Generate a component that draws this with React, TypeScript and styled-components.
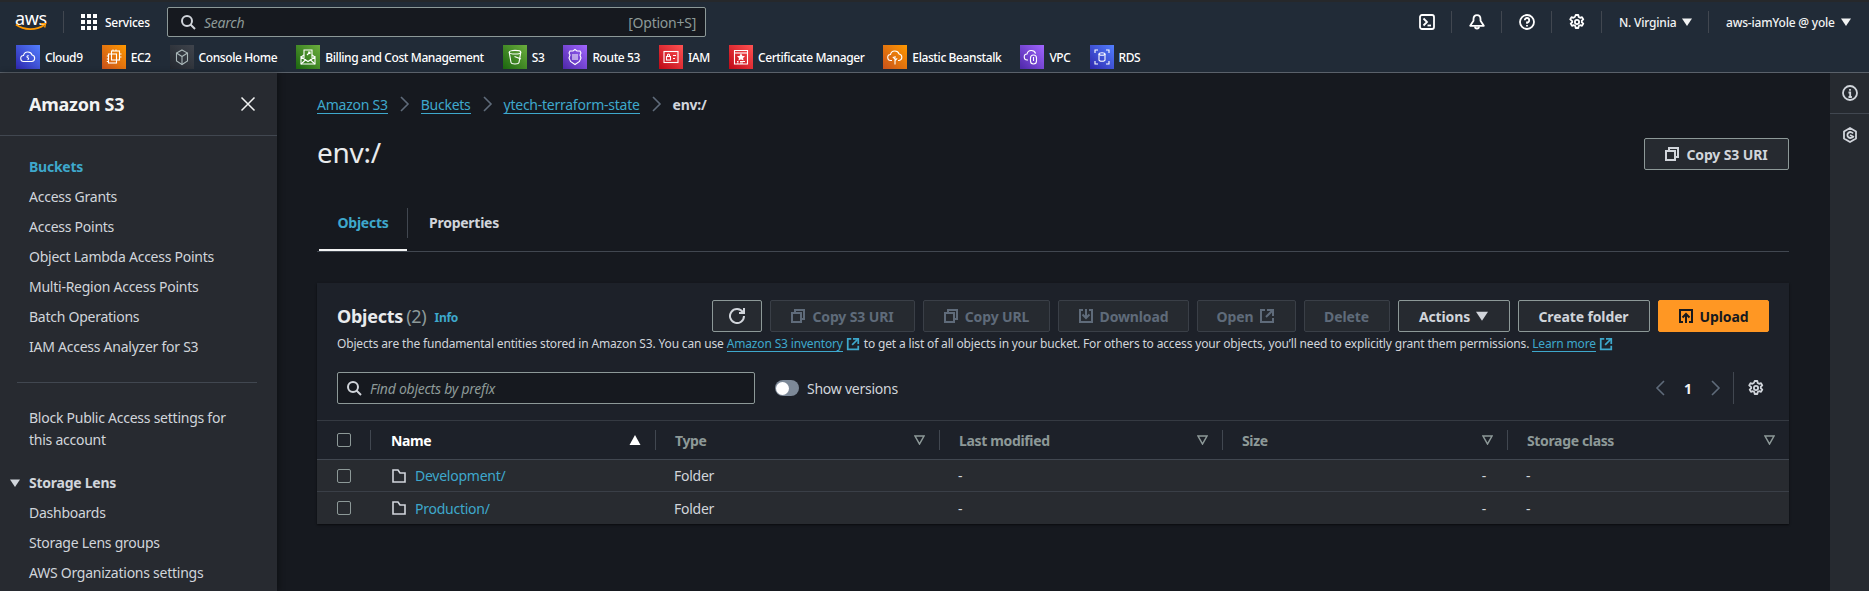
import React from "react";
import styled, { createGlobalStyle } from "styled-components";

const FONT = `"Noto Sans", "Open Sans", sans-serif`;
const LINK = "#3ea8cc";

const Global = createGlobalStyle`
  html, body { margin: 0; padding: 0; background: #16191f; }
  * { box-sizing: border-box; }
  body { font-family: ${FONT}; font-size: 14px; color: #d1d5db; -webkit-font-smoothing: antialiased; }
`;

const Page = styled.div`
  width: 1869px; height: 591px; overflow: hidden; display: flex; flex-direction: column;
  background: #16191f; letter-spacing: -0.25px;
`;
const TopNav = styled.header`
  height: 73px; flex: none; background: #212b37; border-top: 2px solid #26282b; border-bottom: 1px solid #5a616a;
  display: flex; flex-direction: column;
`;
const TopRow = styled.div`
  height: 39px; display: flex; align-items: center; padding: 1px 0 0 15px; color: #fff; font-size: 12px;
`;
const Logo = styled.div`
  width: 32px; height: 22px; position: relative; color: #fff; font-size: 18px; line-height: 15px; font-weight: 400; letter-spacing: -0.4px;
  svg { position: absolute; left: 0; top: 12px; }
`;
const VSep = styled.span`
  width: 1px; height: 22px; background: #414750; margin: 0 17px 0 16px; flex: none;
`;
const ServicesLabel = styled.span`
  margin: 0 17px 0 8px; font-size: 12px; font-weight: 500; width: 45px; white-space: nowrap;
`;
const SearchBox = styled.div`
  width: 539px; height: 30px; background: #16191f; border: 1px solid #8d9998; border-radius: 2px;
  display: flex; align-items: center; padding: 0 9px 0 12px; color: #d1d5db;
`;
const SearchHint = styled.span`
  font-style: italic; color: #8d9998; font-size: 14px; margin-left: 8px; flex: 1;
`;
const KeyHint = styled.span`
  color: #8d9998; font-size: 14px;
`;
const Spacer = styled.div`flex: 1;`;
const HeaderIcon = styled.span`
  width: 50px; height: 22px; border-right: 1px solid #414750; display: flex; align-items: center; justify-content: center; color: #fff; flex: none;
`;
const HeaderMenu = styled.span<{ $w: number; $last?: boolean }>`
  width: ${(p) => p.$w}px; height: 22px; display: flex; align-items: center; gap: 6px; padding-left: 17px; flex: none;
  font-size: 12px; font-weight: 500; white-space: nowrap; color: #f2f3f3; letter-spacing: -0.2px;
  border-right: ${(p) => (p.$last ? "none" : "1px solid #414750")};
`;
const FavRow = styled.div`
  display: flex; align-items: center; padding-left: 16px; height: 24px; margin-top: 4px; gap: 19px;
`;
const Fav = styled.span`
  display: flex; align-items: center; gap: 5px; color: #fff; font-size: 12px; font-weight: 500; white-space: nowrap; height: 24px; letter-spacing: -0.4px;
`;
const FavIcon = styled.span<{ $from: string; $to: string }>`
  width: 24px; height: 24px; flex: none; display: flex; align-items: center; justify-content: center;
  background: linear-gradient(45deg, ${(p) => p.$from}, ${(p) => p.$to});
`;

const Body = styled.div`
  flex: 1; display: flex; min-height: 0;
`;
const Sidebar = styled.nav`
  width: 277px; flex: none; background: #272a30; box-shadow: 2px 0 6px rgba(0,0,0,.35); position: relative;
`;
const SideHead = styled.div`
  height: 63px; border-bottom: 1px solid #414750; display: flex; align-items: center; justify-content: space-between;
  padding: 0 21px 0 29px; color: #f2f3f3; font-size: 18px; font-weight: 700;
`;
const SideList = styled.div`
  padding-top: 16px; display: flex; flex-direction: column;
`;
const SideItem = styled.div<{ $active?: boolean }>`
  height: 30px; line-height: 30px; padding-left: 29px; font-size: 14px; white-space: nowrap;
  color: ${(p) => (p.$active ? LINK : "#d1d5db")}; font-weight: ${(p) => (p.$active ? 700 : 400)};
`;
const SideRule = styled.hr`
  margin: 20px 0 24px 17px; width: 240px; height: 1px; border: 0; background: #414750;
`;
const SideBlock = styled.div`
  padding: 0 29px; width: 260px; line-height: 22px; font-size: 14px; color: #d1d5db; margin-bottom: 16px;
`;
const SideGroup = styled.div`
  height: 31px; display: flex; align-items: center; padding-left: 10px; gap: 9px; font-weight: 700; font-size: 14px; color: #d1d5db;
`;

const Main = styled.main`
  flex: 1; min-width: 0; padding: 21px 40px 0;
`;
const Crumbs = styled.div`
  display: flex; align-items: center; height: 20px; font-size: 14px;
`;
const Crumb = styled.span`
  color: ${LINK}; line-height: 17px; border-bottom: 1px solid ${LINK}; margin-top: 1px; white-space: nowrap;
`;
const CrumbSep = styled.span`
  width: 33px; display: flex; justify-content: center; color: #5f6b7a;
`;
const CrumbNow = styled.span`
  color: #d1d5db; font-weight: 700;
`;
const TitleRow = styled.div`
  display: flex; align-items: center; justify-content: space-between; margin-top: 22px; height: 36px;
`;
const Title = styled.h1`
  margin: -4px 0 0; font-size: 28px; line-height: 36px; font-weight: 400; color: #e9ebed;
`;
const Btn = styled.button<{ $w: number; $off?: boolean; $primary?: boolean }>`
  width: ${(p) => p.$w}px; height: 32px; flex: none; border-radius: 2px; font-family: ${FONT}; font-size: 14px; font-weight: 700; letter-spacing: -0.12px;
  display: flex; align-items: center; justify-content: center; gap: 6px; padding: 0 1px 0 0; white-space: nowrap;
  background: ${(p) => (p.$primary ? "#ff9723" : "#262a30")};
  color: ${(p) => (p.$primary ? "#16191f" : p.$off ? "#5f6b7a" : "#d1d5db")};
  border: 1px solid ${(p) => (p.$primary ? "#ff9723" : p.$off ? "#3a3f47" : "#8d9998")};
`;
const Tabs = styled.div`
  margin-top: 36px; height: 44px; border-bottom: 1px solid #414750; display: flex; padding-left: 2px;
`;
const Tab = styled.div<{ $active?: boolean }>`
  position: relative; width: ${(p) => (p.$active ? 89 : 112)}px; height: 30px; line-height: 30px; text-align: center; font-weight: 700; font-size: 14px;
  color: ${(p) => (p.$active ? LINK : "#d1d5db")}; border-right: ${(p) => (p.$active ? "1px solid #414750" : "none")};
  ${(p) => p.$active && `&::after { content: ""; position: absolute; left: 0; right: 0; top: 41px; height: 2px; background: #f2f3f3; }`}
`;
const Card = styled.section`
  margin-top: 31px; background: #1d2129; box-shadow: 0 1px 2px rgba(0,0,0,.6);
`;
const CardHead = styled.div`
  padding: 17px 20px 16px; height: 138px; border-bottom: 1px solid #353a42;
`;
const ActionRow = styled.div`
  display: flex; align-items: center; gap: 8px;
`;
const CardTitle = styled.h2`
  margin: 0; font-size: 18px; font-weight: 700; color: #e9ebed; white-space: nowrap; line-height: 32px;
`;
const Count = styled.span`
  font-weight: 400; color: #8d9998; margin-left: 3px;
`;
const Info = styled.span`
  font-size: 12px; font-weight: 700; color: ${LINK}; margin-left: 0; line-height: 16px; margin-top: 4px;
`;
const Desc = styled.p`
  margin: 4px 0 0; font-size: 12px; line-height: 16px; color: #d1d5db; white-space: nowrap; display: flex; align-items: center; letter-spacing: -0.16px;
`;
const DescLink = styled.span`
  color: ${LINK}; border-bottom: 1px solid ${LINK}; line-height: 14px; margin: 0 3px 0 3px;
`;
const ExtIcon = styled.span`
  color: ${LINK}; display: inline-flex; margin-right: 4px;
`;
const FilterRow = styled.div`
  display: flex; align-items: center; margin-top: 20px; height: 32px;
`;
const FilterBox = styled.div`
  width: 418px; height: 32px; background: #16191f; border: 1px solid #8d9998; border-radius: 2px; display: flex; align-items: center; padding-left: 8px; color: #d1d5db;
`;
const FilterHint = styled.span`
  font-style: italic; color: #8d9998; font-size: 14px; margin-left: 8px;
`;
const Toggle = styled.span`
  width: 24px; height: 16px; border-radius: 8px; background: #7d8998; margin: 0 8px 0 20px; display: flex; align-items: center; padding-left: 1px;
  &::before { content: ""; width: 13px; height: 13px; border-radius: 50%; background: #fff; }
`;
const ToggleLabel = styled.span`
  font-size: 14px; color: #d1d5db;
`;
const Pager = styled.div`
  display: flex; align-items: center; height: 32px; color: #5f6b7a; padding-right: 5px;
`;
const PageNum = styled.span`
  color: #f2f3f3; font-weight: 700; font-size: 14px; width: 38px; text-align: center;
`;
const PagerRule = styled.span`
  width: 1px; height: 32px; background: #414750; margin: 0 14px 0 10px;
`;
const GearBtn = styled.span`
  color: #d1d5db; display: flex;
`;

const COLS = "53px 285px 284px 283px 285px 282px";
const HeadRow = styled.div`
  display: grid; grid-template-columns: ${COLS}; height: 39px; align-items: center; border-bottom: 1px solid #414750;
`;
const HeadCell = styled.div<{ $on?: boolean }>`
  height: 20px; border-left: 1px solid #414750; padding: 0 14px 0 19px; display: flex; align-items: center; justify-content: space-between;
  font-size: 14px; font-weight: 700; letter-spacing: -0.35px; color: ${(p) => (p.$on ? "#fff" : "#8d9998")};
  &:nth-child(2) { padding-left: 20px; }
`;
const CheckCell = styled.div`
  padding-left: 20px; display: flex; align-items: center;
`;
const Check = styled.span`
  width: 14px; height: 14px; border: 1px solid #8d9998; border-radius: 2px; display: block;
`;
const DataRow = styled.div<{ $last?: boolean }>`
  display: grid; grid-template-columns: ${COLS}; height: 32px; align-items: center; background: #282b30;
  border-bottom: ${(p) => (p.$last ? "none" : "1px solid #3a3f47")};
`;
const NameCell = styled.div`
  display: flex; align-items: center; gap: 8px; padding-left: 21px; color: ${LINK}; font-size: 14px;
  svg { color: #d1d5db; }
`;
const TextCell = styled.div<{ $right?: boolean }>`
  padding-left: 19px; font-size: 14px; color: #d1d5db; ${(p) => p.$right && "text-align: right; padding-right: 21px; padding-left: 0;"}
`;
const Rail = styled.aside`
  width: 40px; flex: none; background: #262a30; border-left: 1px solid #16191f; display: flex; flex-direction: column; color: #d1d5db;
`;
const RailBtn = styled.div<{ $h: number }>`
  height: ${(p) => p.$h}px; display: flex; align-items: center; justify-content: center; border-bottom: 1px solid #414750;
  &:last-child { border-bottom: 0; }
`;

type IP = { s?: number; w?: number; children: React.ReactNode };
const Ic = ({ s = 16, w = 2, children }: IP) => (
  <svg width={s} height={s} viewBox="0 0 16 16" fill="none" stroke="currentColor" strokeWidth={w} style={{ flex: "none" }}>
    {children}
  </svg>
);
const SearchI = ({ s = 16 }: { s?: number }) => (
  <Ic s={s}><circle cx="7" cy="7" r="5" /><path d="M15 15l-4.5-4.5" /></Ic>
);
const CopyI = () => <Ic><path d="M2 5h9v9H2z" /><path d="M5 5V2h9v9h-3" /></Ic>;
const ExtI = ({ s = 16 }: { s?: number }) => (
  <Ic s={s}><path d="M14 8V2H8" /><path d="M14 2L7 9" /><path d="M6 2H2v12h12v-4" /></Ic>
);
const RefreshI = () => (
  <Ic><path d="M10 5h5V0" /><path d="M15 8a7 7 0 1 1-1.2-3.9" /></Ic>
);
const DownI = () => (
  <Ic><path d="M5 2H2v12h12V2h-3" /><path d="M4.5 6.5L8 10l3.5-3.5" /><path d="M8 1v9" /></Ic>
);
const UpI = () => (
  <Ic><path d="M5 14H2V2h12v12h-3" /><path d="M11.5 9.5L8 6 4.5 9.5" /><path d="M8 6v9" /></Ic>
);
const GearI = () => (
  <Ic w={1.8}>
    <path d="M6.7 1h2.6l.4 2 1.4.8 1.9-.7 1.3 2.3-1.5 1.3v1.6l1.5 1.3-1.3 2.3-1.9-.7-1.4.8-.4 2H6.7l-.4-2-1.4-.8-1.9.7-1.3-2.3 1.5-1.3V7.1L1.2 5.4l1.3-2.3 1.9.7 1.4-.8z" strokeLinejoin="round" />
    <circle cx="8" cy="8" r="2.1" />
  </Ic>
);
const FolderI = () => <Ic w={1.6}><path d="M2 14V2h5l2 3h5v9z" /></Ic>;
const Chev = ({ dir = "r", s = 16 }: { dir?: "l" | "r"; s?: number }) => (
  <Ic s={s} w={1.6}><path d={dir === "r" ? "M5 1l7 7-7 7" : "M11 1L4 8l7 7"} /></Ic>
);
const Caret = ({ s = 10, c = "currentColor" }: { s?: number; c?: string }) => (
  <svg width={s} height={s} viewBox="0 0 10 10" style={{ flex: "none" }}><path d="M0 1.5h10L5 9z" fill={c} /></svg>
);
const SortUp = () => (
  <svg width="12" height="10" viewBox="0 0 12 10"><path d="M6 0l5.5 10H.5z" fill="#fff" /></svg>
);
const FilterI = () => (
  <svg width="11" height="10" viewBox="0 0 11 10"><path d="M1 1h9L5.5 9z" fill="none" stroke="#8d9998" strokeWidth="1.5" /></svg>
);

const G = ({ children }: { children: React.ReactNode }) => (
  <svg width="18" height="18" viewBox="0 0 18 18" fill="none" stroke="#fff" strokeWidth="1.1">{children}</svg>
);

const favs: [string, string, string, React.ReactNode][] = [
  ["Cloud9", "#2e27ad", "#527fff", <G><path d="M5 13.5a3 3 0 0 1-.5-6 4.5 4.5 0 0 1 8.6-.5 3.3 3.3 0 0 1-.4 6.5z" /><path d="M9.8 8.2a1 1 0 1 0-.8 1.6c.8 0 .8 1.6-.4 1.8" /></G>],
  ["EC2", "#c8511b", "#ff9900", <G><rect x="6.5" y="3" width="8" height="9" /><rect x="3.5" y="6" width="8" height="9" /><path d="M1.8 8h1.7M1.8 11h1.7M1.8 13.5h1.7M8 3V1.5M11 3V1.5M14.5 6h2M14.5 9h2" /></G>],
  ["Console Home", "#23272e", "#3f444c", <G><path d="M9 2l5.5 3v8L9 16.5 3.5 13V5z" stroke="#aab7b8" /><path d="M3.5 5L9 8.5 14.5 5M9 8.5v8" stroke="#aab7b8" /></G>],
  ["Billing and Cost Management", "#1b660f", "#6cae3e", <G><path d="M2 9l7 4.5L16 9v7H2z" /><path d="M2 9l3-2M16 9l-3-2M2 16l5-4.5M16 16l-5-4.5" /><path d="M5 10V2h8v8" /><path d="M8 7l3-3M9 4h2v2" /></G>],
  ["S3", "#1b660f", "#6cae3e", <G><ellipse cx="9" cy="4.2" rx="5.8" ry="1.8" /><path d="M3.2 4.2L5 14.5c.2 1 1.8 1.5 4 1.5s3.8-.5 4-1.5l1.8-10.3" /><path d="M8.5 8.5l6.5 2.5" /></G>],
  ["Route 53", "#4d27a8", "#a166ff", <G><path d="M9 1.5l2 1.5h3l1 2-1 2 1 3-1.5 3.5L9 16.5 4.5 13.5 3 10l1-3-1-2 1-2h3z" /><path d="M6 9h6M6 11h6M6 7h6" /></G>],
  ["IAM", "#bd0816", "#ff5252", <G><rect x="2" y="3.5" width="14" height="11" /><rect x="4.5" y="8.5" width="4" height="3.5" /><path d="M5.5 8.5V7a1 1 0 0 1 2 0v1.5M11 7.5h3M11 10.5h2" /></G>],
  ["Certificate Manager", "#bd0816", "#ff5252", <G><path d="M2.5 16V2.5h13V16z" /><path d="M2.5 5h13" /><path d="M9 6.5l1 1.8 1.8.2-1.3 1.3.3 1.8L9 10.8l-1.8.8.3-1.8-1.3-1.3 1.8-.2z" fill="#fff" /><path d="M5 13.5h1.5M8 13.5h5M5 15h1.5M8 15h3" /></G>],
  ["Elastic Beanstalk", "#c8511b", "#ff9900", <G><path d="M6 12.5H5a3 3 0 0 1-.5-6 4.5 4.5 0 0 1 8.6-.5 3.3 3.3 0 0 1 0 6.5H12" /><path d="M9 16.5V8M9 11L6.8 8.8M9 12.5l2.2-2.2" /></G>],
  ["VPC", "#4d27a8", "#a166ff", <G><path d="M5 12H4.5a3 3 0 0 1-.5-6 4.5 4.5 0 0 1 8.6-.5" /><rect x="7.5" y="7" width="6" height="9" rx="3" /><path d="M10.5 9v4" /></G>],
  ["RDS", "#2e27ad", "#527fff", <G><path d="M2 5V2h3M13 2h3v3M16 13v3h-3M5 16H2v-3" /><ellipse cx="9" cy="6" rx="3" ry="1.2" /><path d="M6 6v6c0 .7 1.3 1.2 3 1.2s3-.5 3-1.2V6" /></G>],
];

const sideItems = ["Access Grants", "Access Points", "Object Lambda Access Points", "Multi-Region Access Points", "Batch Operations", "IAM Access Analyzer for S3"];

export default function App() {
  return (
    <Page>
      <Global />
      <TopNav>
        <TopRow>
          <Logo>
            aws
            <svg width="32" height="9" viewBox="0 0 32 9" fill="none">
              <path d="M1 1.5c8 6 20 6 28 .8" stroke="#ff9900" strokeWidth="1.8" />
              <path d="M26 .8l4.5-.3-.8 4" stroke="#ff9900" strokeWidth="1.4" />
            </svg>
          </Logo>
          <VSep />
          <svg width="16" height="16" viewBox="0 0 16 16" fill="#fff" style={{ flex: "none" }}>
            {[0, 6, 12].flatMap((x) => [0, 6, 12].map((y) => <rect key={`${x}-${y}`} x={x} y={y} width="4" height="4" />))}
          </svg>
          <ServicesLabel>Services</ServicesLabel>
          <SearchBox>
            <SearchI />
            <SearchHint>Search</SearchHint>
            <KeyHint>[Option+S]</KeyHint>
          </SearchBox>
          <Spacer />
          <HeaderIcon>
            <Ic w={1.8}><rect x="1" y="1" width="14" height="14" rx="2" /><path d="M4.5 4.5L8 8l-3.5 3.5" /><path d="M8.5 11.5H12" /></Ic>
          </HeaderIcon>
          <HeaderIcon>
            <Ic w={1.8}><path d="M8 1.2C5.6 1.2 4.5 3 4.5 5v1.8L1.2 11.8h13.6L11.5 6.8V5c0-2-1.1-3.8-3.5-3.8z" strokeLinejoin="round" /><path d="M6 12.5a2 2 0 0 0 4 0" /></Ic>
          </HeaderIcon>
          <HeaderIcon>
            <Ic w={1.8}><circle cx="8" cy="8" r="7" /><path d="M5.8 6.2A2.2 2.2 0 1 1 8 8.4v1.4" /><path d="M8 11v1.5" /></Ic>
          </HeaderIcon>
          <HeaderIcon><GearI /></HeaderIcon>
          <HeaderMenu $w={107}>N. Virginia <Caret /></HeaderMenu>
          <HeaderMenu $w={160} $last>aws-iamYole @ yole <Caret /></HeaderMenu>
        </TopRow>
        <FavRow>
          {favs.map(([name, from, to, glyph]) => (
            <Fav key={name}>
              <FavIcon $from={from} $to={to}>{glyph}</FavIcon>
              {name}
            </Fav>
          ))}
        </FavRow>
      </TopNav>
      <Body>
        <Sidebar>
          <SideHead>
            Amazon S3
            <Ic s={16} w={1.5}><path d="M1.5 1.5l13 13M14.5 1.5l-13 13" /></Ic>
          </SideHead>
          <SideList>
            <SideItem $active>Buckets</SideItem>
            {sideItems.map((t) => <SideItem key={t}>{t}</SideItem>)}
          </SideList>
          <SideRule />
          <SideBlock>Block Public Access settings for this account</SideBlock>
          <SideGroup><Caret />Storage Lens</SideGroup>
          <SideItem>Dashboards</SideItem>
          <SideItem>Storage Lens groups</SideItem>
          <SideItem>AWS Organizations settings</SideItem>
        </Sidebar>
        <Main>
          <Crumbs>
            <Crumb>Amazon S3</Crumb>
            <CrumbSep><Chev /></CrumbSep>
            <Crumb>Buckets</Crumb>
            <CrumbSep><Chev /></CrumbSep>
            <Crumb>ytech-terraform-state</Crumb>
            <CrumbSep><Chev /></CrumbSep>
            <CrumbNow>env:/</CrumbNow>
          </Crumbs>
          <TitleRow>
            <Title>env:/</Title>
            <Btn $w={145}><CopyI />Copy S3 URI</Btn>
          </TitleRow>
          <Tabs>
            <Tab $active>Objects</Tab>
            <Tab>Properties</Tab>
          </Tabs>
          <Card>
            <CardHead>
              <ActionRow>
                <CardTitle>Objects<Count>(2)</Count></CardTitle>
                <Info>Info</Info>
                <Spacer />
                <Btn $w={50}><RefreshI /></Btn>
                <Btn $w={145} $off><CopyI />Copy S3 URI</Btn>
                <Btn $w={127} $off><CopyI />Copy URL</Btn>
                <Btn $w={131} $off><DownI />Download</Btn>
                <Btn $w={99} $off>Open<ExtI /></Btn>
                <Btn $w={86} $off>Delete</Btn>
                <Btn $w={112}>Actions<Caret s={12} /></Btn>
                <Btn $w={132}>Create folder</Btn>
                <Btn $w={111} $primary><UpI />Upload</Btn>
              </ActionRow>
              <Desc>
                Objects are the fundamental entities stored in Amazon S3. You can use
                <DescLink>Amazon S3 inventory</DescLink>
                <ExtIcon><ExtI s={14} /></ExtIcon>
                to get a list of all objects in your bucket. For others to access your objects, you’ll need to explicitly grant them permissions.
                <DescLink>Learn more</DescLink>
                <ExtIcon><ExtI s={14} /></ExtIcon>
              </Desc>
              <FilterRow>
                <FilterBox><SearchI /><FilterHint>Find objects by prefix</FilterHint></FilterBox>
                <Toggle />
                <ToggleLabel>Show versions</ToggleLabel>
                <Spacer />
                <Pager>
                  <Chev dir="l" />
                  <PageNum>1</PageNum>
                  <Chev />
                  <PagerRule />
                  <GearBtn><GearI /></GearBtn>
                </Pager>
              </FilterRow>
            </CardHead>
            <HeadRow>
              <CheckCell><Check /></CheckCell>
              <HeadCell $on>Name<SortUp /></HeadCell>
              <HeadCell>Type<FilterI /></HeadCell>
              <HeadCell>Last modified<FilterI /></HeadCell>
              <HeadCell>Size<FilterI /></HeadCell>
              <HeadCell>Storage class<FilterI /></HeadCell>
            </HeadRow>
            {["Development/", "Production/"].map((n, i) => (
              <DataRow key={n} $last={i === 1}>
                <CheckCell><Check /></CheckCell>
                <NameCell><FolderI />{n}</NameCell>
                <TextCell>Folder</TextCell>
                <TextCell>-</TextCell>
                <TextCell $right>-</TextCell>
                <TextCell>-</TextCell>
              </DataRow>
            ))}
          </Card>
        </Main>
        <Rail>
          <RailBtn $h={41}>
            <Ic w={1.8}><circle cx="8" cy="8" r="7" /><path d="M6.5 7.5H8.2V12M6.5 12h3.4" /><path d="M8 4v1.8" /></Ic>
          </RailBtn>
          <RailBtn $h={42}>
            <Ic w={1.8}><path d="M8 1l6 3.5v7L8 15l-6-3.5v-7z" strokeLinejoin="round" /><path d="M11 9.5A3 3 0 1 1 11 6.5" /><path d="M8 8l4 2" /></Ic>
          </RailBtn>
        </Rail>
      </Body>
    </Page>
  );
}
